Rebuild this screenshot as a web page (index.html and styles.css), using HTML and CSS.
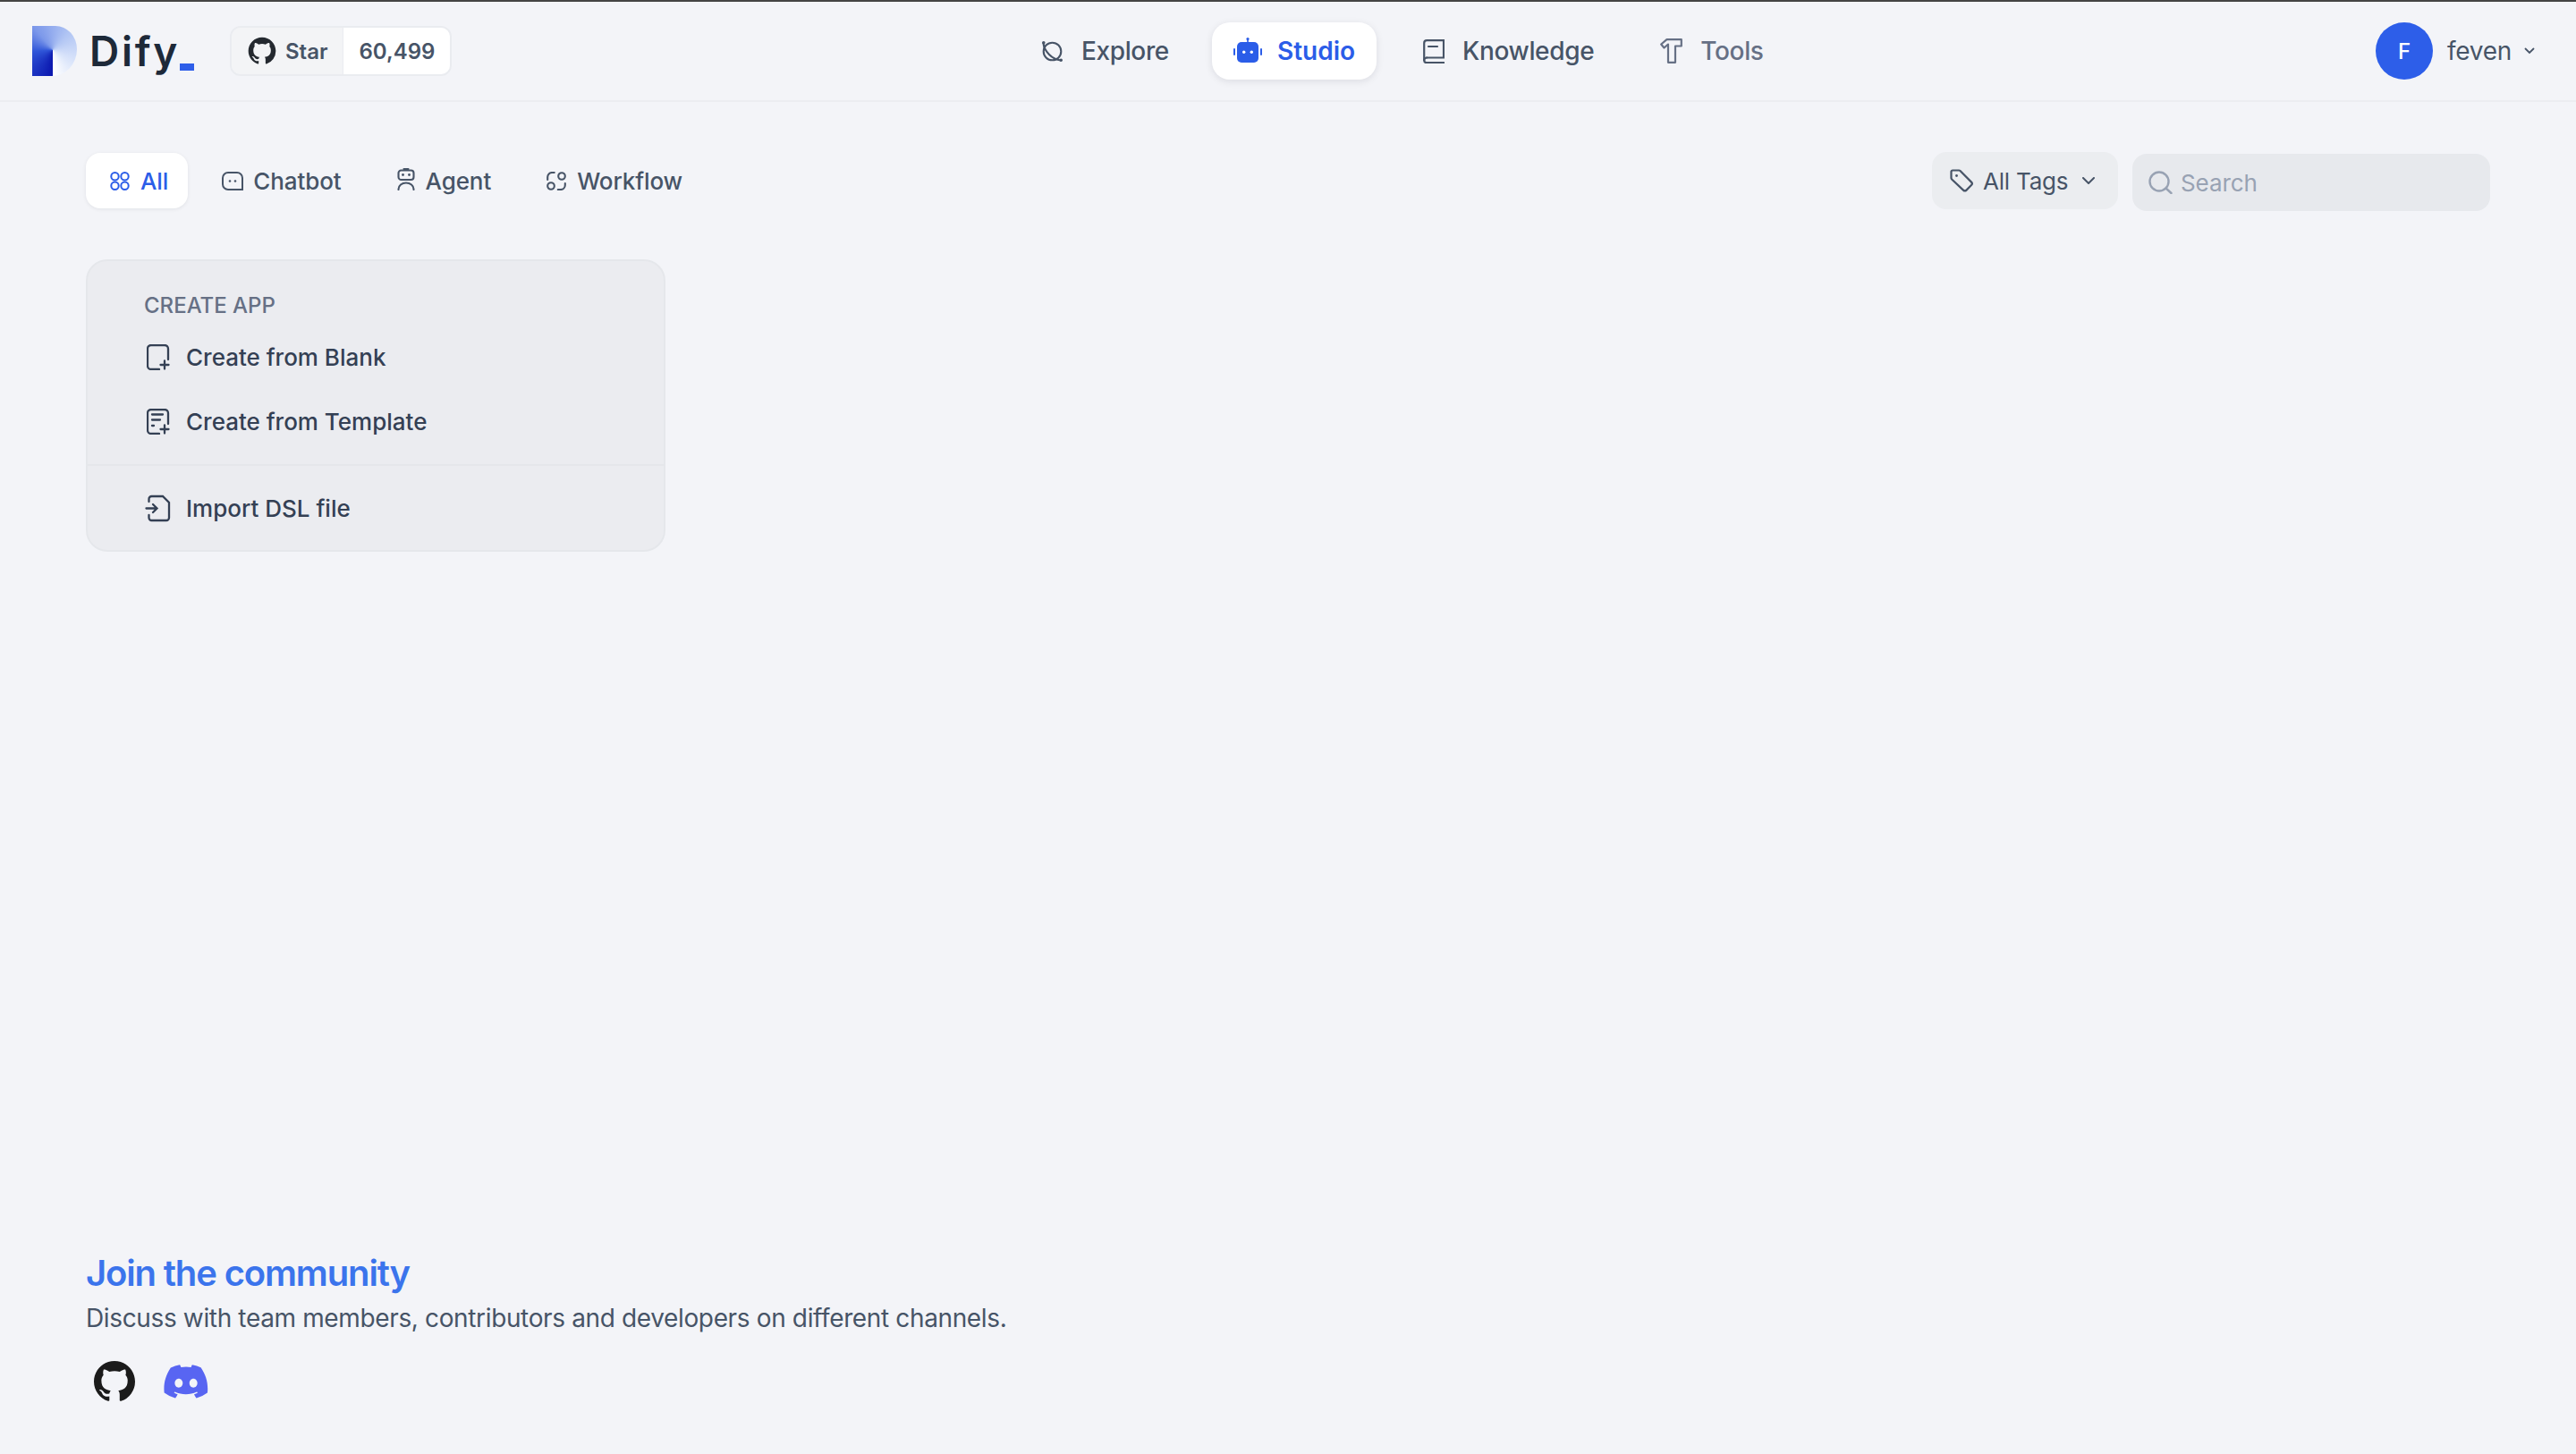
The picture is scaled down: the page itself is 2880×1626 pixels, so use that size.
FILE: index.html
```html
<!DOCTYPE html>
<html lang="en">
<head>
<meta charset="utf-8">
<title>Dify Studio</title>
<link rel="stylesheet" href="styles.css">
</head>
<body>
<div class="app">
  <header class="topbar">
    <div class="brand">
      <div class="logo-mark"></div>
      <div class="logo-word">Dify<span class="logo-cursor"></span></div>
      <div class="star">
        <div class="star-left">
          <svg class="star-gh" viewBox="0 0 24 24"><path fill="#24292f" d="M12 .5C5.65.5.5 5.65.5 12c0 5.08 3.29 9.39 7.86 10.91.58.1.79-.25.79-.55v-2.14c-3.2.7-3.87-1.36-3.87-1.36-.52-1.33-1.28-1.68-1.28-1.68-1.04-.71.08-.7.08-.7 1.15.08 1.76 1.19 1.76 1.19 1.03 1.76 2.69 1.25 3.35.96.1-.75.4-1.25.73-1.54-2.55-.29-5.24-1.28-5.24-5.68 0-1.25.45-2.28 1.18-3.08-.12-.29-.51-1.46.11-3.04 0 0 .97-.31 3.17 1.18a11 11 0 0 1 5.77 0c2.2-1.49 3.17-1.18 3.17-1.18.63 1.58.23 2.75.11 3.04.74.8 1.18 1.83 1.18 3.08 0 4.41-2.69 5.38-5.25 5.67.41.36.78 1.05.78 2.12v3.14c0 .31.21.66.8.55A11.5 11.5 0 0 0 23.5 12C23.5 5.65 18.35.5 12 .5z"/></svg>
          <span>Star</span>
        </div>
        <div class="star-count">60,499</div>
      </div>
    </div>
    <nav class="mainnav">
      <a class="navitem navitem-explore">
        <svg class="icon-explore" viewBox="0 0 25 25" fill="none" stroke="#475467" stroke-width="2.100"><circle cx="12.500" cy="12.500" r="9.800"/><path d="M2.500 3C2.800 8 5.500 12.500 9 16s8 6 13 6.500" stroke-width="2.200"/><circle cx="2.800" cy="2.800" r="1.800" fill="#475467" stroke="none"/><circle cx="22.200" cy="22.200" r="1.800" fill="#475467" stroke="none"/></svg>
        <span>Explore</span>
      </a>
      <a class="navitem navitem-active">
        <svg class="icon-robot" viewBox="0 0 32 28" fill="#2b5de8"><rect x="4" y="5" width="24" height="23" rx="5"/><rect x="0" y="12" width="2" height="8" rx="1"/><rect x="30" y="12" width="2" height="8" rx="1"/><rect x="15.200" y="1" width="1.600" height="5"/><circle cx="16" cy="1.600" r="1.600"/><circle cx="11.700" cy="16.300" r="1.700" fill="#fff"/><circle cx="20.300" cy="16.300" r="1.700" fill="#fff"/></svg>
        <span>Studio</span>
      </a>
      <a class="navitem navitem-knowledge">
        <svg class="icon-book" viewBox="-2 0 26 27" fill="none" stroke="#475467" stroke-width="2.200"><path d="M4 20.500h19V1.200H4.200a3 3 0 0 0-3 3v19a3 3 0 0 0 3 3H23.500"/><path d="M1.200 23.500a3 3 0 0 1 3-3"/><path d="M6 8h10"/></svg>
        <span>Knowledge</span>
      </a>
      <a class="navitem navitem-muted">
        <svg class="icon-hammer" viewBox="0 0 25 28" fill="none" stroke="#667085" stroke-width="2.200" stroke-linejoin="round"><path d="M1.200 6.500 7.500 1.200H23.800V8.500H17V26.800H9V6.500L4.500 10.500z"/></svg>
        <span>Tools</span>
      </a>
    </nav>
    <div class="account">
      <div class="avatar">F</div>
      <span class="account-name">feven</span>
      <svg class="account-chev" viewBox="0 0 12 8" fill="none" stroke="#475467" stroke-width="1.800"><path d="M1.500 1.500 6 6l4.500-4.500"/></svg>
    </div>
  </header>

  <main class="content">
    <div class="toolbar">
      <div class="tabs">
        <a class="tab tab-active">
          <svg class="icon-all" viewBox="0 0 22 21" fill="none" stroke="#2b5de8" stroke-width="2"><circle cx="5.500" cy="5.200" r="4.200"/><circle cx="16.500" cy="5.200" r="4.200"/><circle cx="5.500" cy="15.800" r="4.200"/><circle cx="16.500" cy="15.800" r="4.200"/></svg>
          <span>All</span>
        </a>
        <a class="tab tab-chat">
          <svg class="icon-chat" viewBox="0 0 24 21" fill="none" stroke="#475467" stroke-width="2"><path d="M23 20H7a6 6 0 0 1-6-6V7a6 6 0 0 1 6-6h10a6 6 0 0 1 6 6z"/><circle cx="9" cy="10.500" r="1.300" fill="#475467" stroke="none"/><circle cx="15" cy="10.500" r="1.300" fill="#475467" stroke="none"/></svg>
          <span>Chatbot</span>
        </a>
        <a class="tab">
          <svg class="icon-agent" viewBox="0 0 20 25" fill="none" stroke="#475467" stroke-width="2.100"><path d="M7.500 1.100h5"/><rect x="1.500" y="2.500" width="17" height="10.500" rx="3"/><path d="M1.500 24v-.5a8.500 7 0 0 1 17 0v.5"/><circle cx="6.500" cy="7.500" r="1.400" fill="#475467" stroke="none"/><circle cx="13.500" cy="7.500" r="1.400" fill="#475467" stroke="none"/></svg>
          <span>Agent</span>
        </a>
        <a class="tab">
          <svg class="icon-flow" viewBox="0 0 22 21" fill="none" stroke="#475467" stroke-width="2.100"><circle cx="17" cy="5" r="3.800"/><circle cx="5" cy="16" r="3.800"/><path d="M1.200 9V6a5 5 0 0 1 5-5h2.500M20.800 13v2a5 5 0 0 1-5 5h-3"/></svg>
          <span>Workflow</span>
        </a>
      </div>
      <div class="filters">
        <div class="tagfilter">
          <svg class="tagicon" viewBox="0 0 26 26" fill="none" stroke="#475467" stroke-width="2.200" stroke-linejoin="round"><path d="M1.500 3A1.500 1.500 0 0 1 3 1.500H10a2 2 0 0 1 1.500.6l12.500 12.500a2.500 2.500 0 0 1 0 3.500l-5.500 5.500a2.500 2.500 0 0 1-3.500 0L2.100 11.500a2 2 0 0 1-.6-1.500z"/><circle cx="7.500" cy="7.500" r="1.400" fill="#475467" stroke="none"/></svg>
          <span>All Tags</span>
          <svg class="tagchev" viewBox="0 0 14 8" fill="none" stroke="#475467" stroke-width="2"><path d="M1 1l6 6 6-6"/></svg>
        </div>
        <div class="search">
          <svg class="searchicon" viewBox="0 0 27 26" fill="none" stroke="#98a2b3" stroke-width="2.400"><circle cx="12" cy="12" r="10.500"/><path d="m19.500 19.500 6 5.500"/></svg>
          <span>Search</span>
        </div>
      </div>
    </div>

    <section class="createcard">
      <div class="create-top">
        <div class="create-label">CREATE APP</div>
        <a class="create-row">
          <svg class="rowicon" viewBox="0 0 26 29" fill="none" stroke="#344054" stroke-width="2.300"><path d="M14 28H5a4 4 0 0 1-4-4V5a4 4 0 0 1 4-4h15a4 4 0 0 1 4 4v12"/><path d="M20 18.500v9M15.500 23h9"/></svg>
          <span>Create from Blank</span>
        </a>
        <a class="create-row">
          <svg class="rowicon" viewBox="0 0 26 29" fill="none" stroke="#344054" stroke-width="2.300"><path d="M14 28H5a4 4 0 0 1-4-4V5a4 4 0 0 1 4-4h15a4 4 0 0 1 4 4v12"/><path d="M20 18.500v9M15.500 23h9M6 6.500h12M6 12.500h9M6 19h2"/></svg>
          <span>Create from Template</span>
        </a>
      </div>
      <div class="create-bottom">
        <a class="create-row">
          <svg class="rowicon rowicon-import" viewBox="2 0 26 29" fill="none" stroke="#344054" stroke-width="2.300"><path d="M4.500 7V4a3 3 0 0 1 3-3H20l7 7v17a3 3 0 0 1-3 3H7.500a3 3 0 0 1-3-3v-3"/><path d="M1.500 14.500h11.500M9 10l4.500 4.500L9 19"/></svg>
          <span>Import DSL file</span>
        </a>
      </div>
    </section>
  </main>

  <footer class="community">
    <h2 class="community-title">Join the community</h2>
    <p class="community-text">Discuss with team members, contributors and developers on different channels.</p>
    <div class="community-links">
      <svg class="link-gh" viewBox="0 0 24 24"><path fill="#1b1b1b" d="M12 .5C5.65.5.5 5.65.5 12c0 5.08 3.29 9.39 7.86 10.91.58.1.79-.25.79-.55v-2.14c-3.2.7-3.87-1.36-3.87-1.36-.52-1.33-1.28-1.68-1.28-1.68-1.04-.71.08-.7.08-.7 1.15.08 1.76 1.19 1.76 1.19 1.03 1.76 2.69 1.25 3.35.96.1-.75.4-1.25.73-1.54-2.55-.29-5.24-1.28-5.24-5.68 0-1.25.45-2.28 1.18-3.08-.12-.29-.51-1.46.11-3.04 0 0 .97-.31 3.17 1.18a11 11 0 0 1 5.77 0c2.2-1.49 3.17-1.18 3.17-1.18.63 1.58.23 2.75.11 3.04.74.8 1.18 1.83 1.18 3.08 0 4.41-2.69 5.38-5.25 5.67.41.36.78 1.05.78 2.12v3.14c0 .31.21.66.8.55A11.5 11.5 0 0 0 23.5 12C23.5 5.65 18.35.5 12 .5z"/></svg>
      <svg class="link-dc" viewBox="0 0 71 55"><path fill="#5865f2" d="M60.100 4.900A58.500 58.500 0 0 0 45.600.4a.2.2 0 0 0-.2.1 40.800 40.800 0 0 0-1.800 3.700 54 54 0 0 0-16.200 0A37.400 37.400 0 0 0 25.500.500a.2.2 0 0 0-.2-.1A58.400 58.400 0 0 0 10.800 4.900a.2.2 0 0 0-.1.1C1.500 18.700-1 32.100.2 45.300a.2.2 0 0 0 .1.200 58.800 58.800 0 0 0 17.700 8.900.2.2 0 0 0 .2-.1 42 42 0 0 0 3.600-5.900.2.2 0 0 0-.1-.3 38.800 38.800 0 0 1-5.500-2.600.2.2 0 0 1 0-.4l1.100-.9a.2.2 0 0 1 .2 0c11.500 5.300 24 5.300 35.400 0a.2.2 0 0 1 .2 0l1.100.9a.2.2 0 0 1 0 .4 36.400 36.400 0 0 1-5.500 2.600.2.2 0 0 0-.1.3 47.200 47.200 0 0 0 3.600 5.900.2.2 0 0 0 .2.1 58.600 58.600 0 0 0 17.700-8.900.2.2 0 0 0 .1-.2c1.500-15.300-2.500-28.600-10.500-40.300a.2.2 0 0 0-.1-.1zM23.700 37.200c-3.500 0-6.400-3.200-6.400-7.200s2.800-7.200 6.400-7.200c3.600 0 6.500 3.300 6.400 7.200 0 4-2.800 7.200-6.400 7.200zm23.700 0c-3.500 0-6.400-3.200-6.400-7.200s2.800-7.200 6.400-7.200c3.600 0 6.500 3.300 6.400 7.200 0 4-2.800 7.200-6.400 7.200z"/></svg>
    </div>
  </footer>
</div>
</body>
</html>
```
FILE: styles.css
```css
* { box-sizing: border-box; }
html, body { margin: 0; padding: 0; }
body {
  background: #f3f4f8;
  font-family: Inter, "Liberation Sans", sans-serif;
  color: #475467;
}
svg { stroke-linecap: round; }
.app {
  height: 1626px;
  display: flex;
  flex-direction: column;
  border-top: 2px solid #444;
  overflow: hidden;
}
.topbar {
  height: 112px;
  flex: none;
  display: flex;
  align-items: center;
  justify-content: space-between;
  padding: 0 46px 0 36px;
  border-bottom: 2px solid #ecedf1;
}
.brand { display: flex; align-items: center; }
.logo-mark {
  width: 50px;
  height: 56px;
  margin-right: 14px;
  border-radius: 0 24px 28px 0 / 0 26px 30px 0;
  background: conic-gradient(from 180deg at 46% 48%, #0a16ae 0deg, #2f55d8 85deg, #7c98ea 140deg, #b2c6f4 225deg, #dfe8fb 310deg, #ffffff 360deg);
}
.logo-word {
  display: flex;
  align-items: flex-end;
  width: 157px;
  font-size: 46px;
  font-weight: 600;
  line-height: 56px;
  letter-spacing: 2.700px;
  color: #1d2939;
}
.logo-cursor {
  width: 16px;
  height: 8px;
  margin: 0 0 6px 0;
  background: #2e5ee9;
}
.star {
  display: flex;
  height: 56px;
  border: 2px solid #eaecf0;
  border-radius: 12px;
  overflow: hidden;
  font-size: 24px;
  font-weight: 600;
}
.star-left {
  display: flex;
  align-items: center;
  gap: 10px;
  padding: 0 16px 0 18px;
  background: #f3f4f6;
  border-right: 1px solid #eaecf0;
}
.star-gh { width: 32px; height: 32px; }
.star-count {
  display: flex;
  align-items: center;
  padding: 0 17px 0 18px;
  background: #fff;
}
.mainnav { display: flex; align-items: center; gap: 26px; margin-right: 26px; }
.navitem {
  display: flex;
  align-items: center;
  height: 64px;
  padding: 0 24px;
  border-radius: 20px;
  font-size: 28px;
  font-weight: 500;
  letter-spacing: -.35px;
  white-space: nowrap;
  gap: 20px;
}
.navitem-explore { padding-right: 22px; }
.navitem-muted { color: #667085; }
.navitem-active {
  background: #fff;
  color: #2b5de8;
  font-weight: 600;
  gap: 17px;
  letter-spacing: 0;
  box-shadow: 0 2px 8px rgba(16, 24, 40, .1);
}
.icon-explore { width: 25px; height: 25px; flex: none; }
.icon-robot { width: 32px; height: 28px; flex: none; margin-top: -2px; }
.icon-book { width: 26px; height: 27px; flex: none; }
.icon-hammer { width: 25px; height: 28px; flex: none; }
.account { display: flex; align-items: center; }
.avatar {
  width: 64px;
  height: 64px;
  border-radius: 50%;
  background: #2d5ee9;
  color: #fff;
  font-size: 24px;
  font-weight: 500;
  display: flex;
  align-items: center;
  justify-content: center;
}
.account-name { margin: 0 14px 0 16px; font-size: 28px; letter-spacing: -.3px; }
.account-chev { width: 12px; height: 8px; }
.content { padding: 0 96px; flex: 1; }
.toolbar {
  display: flex;
  justify-content: space-between;
  align-items: flex-start;
  height: 66px;
  margin-top: 56px;
}
.tabs { display: flex; align-items: center; gap: 14px; margin-top: 1px; }
.tab {
  display: flex;
  align-items: center;
  gap: 12px;
  height: 62px;
  padding: 0 24px;
  border-radius: 16px;
  font-size: 26px;
  font-weight: 500;
  letter-spacing: -.1px;
  white-space: nowrap;
}
.tab-chat { gap: 11px; }
.tab-active {
  padding: 0 22px 0 27px;
  background: #fff;
  color: #2b5de8;
  box-shadow: 0 1px 4px rgba(16, 24, 40, .08);
}
.icon-all { width: 22px; height: 21px; flex: none; }
.icon-chat { width: 24px; height: 21px; flex: none; }
.icon-agent { width: 20px; height: 25px; flex: none; margin-top: -4px; }
.icon-flow { width: 22px; height: 21px; flex: none; }
.filters { display: flex; align-items: flex-start; gap: 16px; }
.tagfilter {
  display: flex;
  align-items: center;
  width: 208px;
  height: 64px;
  padding: 0 20px;
  border-radius: 16px;
  background: #ebedf0;
  font-size: 26px;
  letter-spacing: -.2px;
  white-space: nowrap;
}
.tagicon { width: 26px; height: 26px; margin-right: 11px; flex: none; }
.tagchev { width: 14px; height: 8px; margin-left: 16px; flex: none; }
.search {
  display: flex;
  align-items: center;
  width: 400px;
  height: 64px;
  padding: 0 18px;
  margin-top: 2px;
  border-radius: 16px;
  background: #e7e9ed;
  color: #98a2b3;
  font-size: 26px;
  letter-spacing: -.1px;
}
.searchicon { width: 27px; height: 26px; margin-right: 9px; flex: none; }
.createcard {
  width: 648px;
  height: 327px;
  margin-top: 54px;
  border: 2px solid #e5e7eb;
  border-radius: 24px;
  background: #ebecf0;
  display: flex;
  flex-direction: column;
}
.create-top { height: 229px; padding: 34px 0 0 63px; border-bottom: 2px solid #e5e7eb; }
.create-label { margin-bottom: 5px; font-size: 24px; font-weight: 500; line-height: 32px; color: #667085; }
.create-row {
  display: flex;
  align-items: center;
  height: 72px;
  gap: 18px;
  font-size: 26px;
  font-weight: 500;
  color: #344054;
}
.create-top .create-row { margin-left: 3px; }
.create-bottom { padding: 11px 0 0 66px; }
.rowicon { width: 26px; height: 29px; flex: none; }
.rowicon-import { overflow: visible; }
.community { padding: 0 96px 57px; flex: none; }
.community-title {
  margin: 0 0 2px;
  font-size: 40px;
  line-height: 52px;
  font-weight: 600;
  letter-spacing: -1.150px;
  color: #3b74ec;
}
.community-text { margin: 0; font-size: 28px; line-height: 44px; letter-spacing: -.36px; }
.community-links { display: flex; align-items: center; gap: 31px; margin: 25px 0 0 8px; }
.link-gh { width: 48px; height: 48px; }
.link-dc { width: 50px; height: 38px; }
```
